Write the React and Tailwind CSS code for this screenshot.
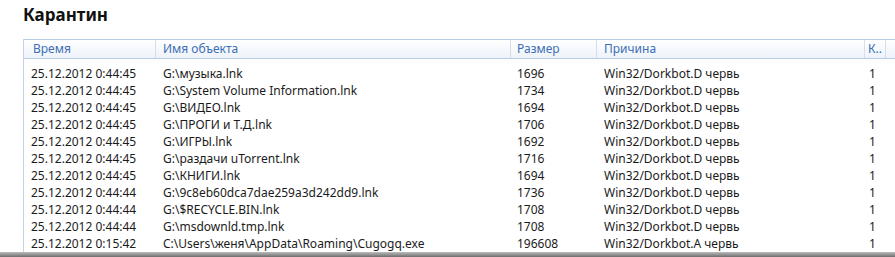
const rows = [
  ['25.12.2012 0:44:45', 'G:\\музыка.lnk', '1696', 'Win32/Dorkbot.D червь', '1'],
  ['25.12.2012 0:44:45', 'G:\\System Volume Information.lnk', '1734', 'Win32/Dorkbot.D червь', '1'],
  ['25.12.2012 0:44:45', 'G:\\ВИДЕО.lnk', '1694', 'Win32/Dorkbot.D червь', '1'],
  ['25.12.2012 0:44:45', 'G:\\ПРОГИ и Т.Д.lnk', '1706', 'Win32/Dorkbot.D червь', '1'],
  ['25.12.2012 0:44:45', 'G:\\ИГРЫ.lnk', '1692', 'Win32/Dorkbot.D червь', '1'],
  ['25.12.2012 0:44:45', 'G:\\раздачи uTorrent.lnk', '1716', 'Win32/Dorkbot.D червь', '1'],
  ['25.12.2012 0:44:45', 'G:\\КНИГИ.lnk', '1694', 'Win32/Dorkbot.D червь', '1'],
  ['25.12.2012 0:44:44', 'G:\\9c8eb60dca7dae259a3d242dd9.lnk', '1736', 'Win32/Dorkbot.D червь', '1'],
  ['25.12.2012 0:44:44', 'G:\\$RECYCLE.BIN.lnk', '1708', 'Win32/Dorkbot.D червь', '1'],
  ['25.12.2012 0:44:44', 'G:\\msdownld.tmp.lnk', '1708', 'Win32/Dorkbot.D червь', '1'],
  ['25.12.2012 0:15:42', 'C:\\Users\\женя\\AppData\\Roaming\\Cugogq.exe', '196608', 'Win32/Dorkbot.A червь', '1'],
];

const cols = 'grid grid-cols-[132px_355px_86px_268px_21px_1fr]';

export default function App() {
  return (
    <div className="w-[895px] h-[257px] bg-white overflow-hidden flex flex-col font-['Noto_Sans',sans-serif]">
      <h1 className="pl-[23px] pt-[2px] h-[39px] text-[17px] font-bold text-[#111] leading-[26px]">
        Карантин
      </h1>
      <div className="ml-[23px] flex-1 border-l border-[#c5d3e6] flex flex-col">
        <div className={`${cols} h-[20px] border-t border-b border-[#b9cbe3] bg-gradient-to-b from-white to-[#eef3fa] text-[12px] text-[#3c6db5] leading-[18px]`}>
          <div className="pl-[9px] border-r border-[#d5dfec]">Время</div>
          <div className="pl-[7px] border-r border-[#d5dfec]">Имя объекта</div>
          <div className="pl-[6px] border-r border-[#d5dfec]">Размер</div>
          <div className="pl-[7px] border-r border-[#d5dfec]">Причина</div>
          <div className="pl-[3px] border-r border-[#d5dfec]">К..</div>
          <div />
        </div>
        <div className="pt-[6px] text-[12px] text-[#1b1b1b]">
          {rows.map((r, i) => (
            <div key={i} className={`${cols} h-[17px] leading-[17px] whitespace-nowrap`}>
              <div className="pl-[7px]">{r[0]}</div>
              <div className="pl-[7px]">{r[1]}</div>
              <div className="pl-[6px]">{r[2]}</div>
              <div className="pl-[7px]">{r[3]}</div>
              <div className="pl-[4px]">{r[4]}</div>
              <div />
            </div>
          ))}
        </div>
      </div>
      <div className="h-[5px] shrink-0 bg-gradient-to-b from-[#bdbdbd] to-[#6e6e6e]" />
    </div>
  );
}
